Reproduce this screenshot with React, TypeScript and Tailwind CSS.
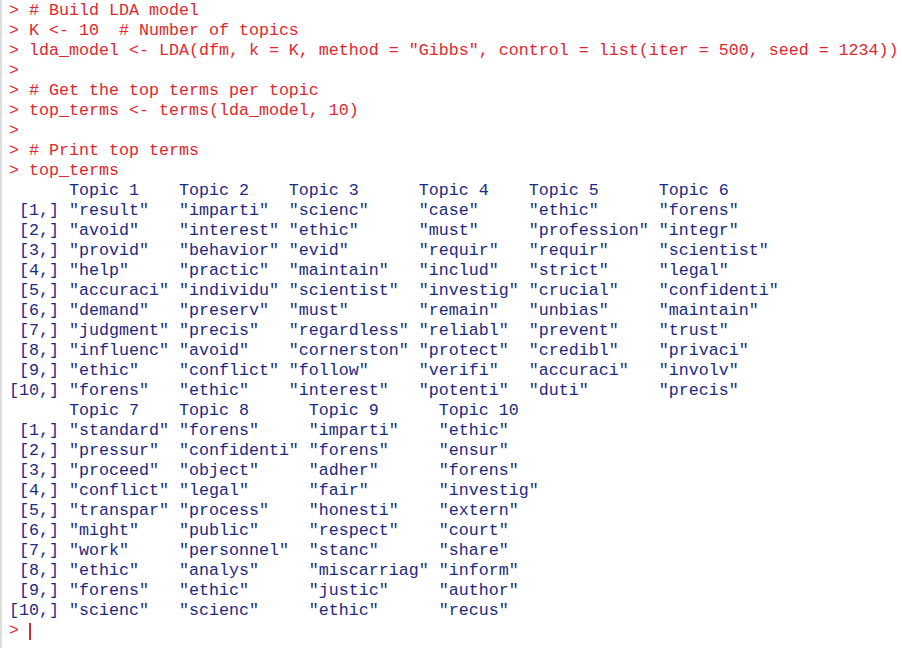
import React from 'react';

type Col = [string, string[]];

const block1: Col[] = [
    ['Topic 1', ['result', 'avoid', 'provid', 'help', 'accuraci', 'demand', 'judgment', 'influenc', 'ethic', 'forens']],
    ['Topic 2', ['imparti', 'interest', 'behavior', 'practic', 'individu', 'preserv', 'precis', 'avoid', 'conflict', 'ethic']],
    ['Topic 3', ['scienc', 'ethic', 'evid', 'maintain', 'scientist', 'must', 'regardless', 'cornerston', 'follow', 'interest']],
    ['Topic 4', ['case', 'must', 'requir', 'includ', 'investig', 'remain', 'reliabl', 'protect', 'verifi', 'potenti']],
    ['Topic 5', ['ethic', 'profession', 'requir', 'strict', 'crucial', 'unbias', 'prevent', 'credibl', 'accuraci', 'duti']],
    ['Topic 6', ['forens', 'integr', 'scientist', 'legal', 'confidenti', 'maintain', 'trust', 'privaci', 'involv', 'precis']],
];

const block2: Col[] = [
    ['Topic 7', ['standard', 'pressur', 'proceed', 'conflict', 'transpar', 'might', 'work', 'ethic', 'forens', 'scienc']],
    ['Topic 8', ['forens', 'confidenti', 'object', 'legal', 'process', 'public', 'personnel', 'analys', 'ethic', 'scienc']],
    ['Topic 9', ['imparti', 'forens', 'adher', 'fair', 'honesti', 'respect', 'stanc', 'miscarriag', 'justic', 'ethic']],
    ['Topic 10', ['ethic', 'ensur', 'forens', 'investig', 'extern', 'court', 'share', 'inform', 'author', 'recus']],
];

// print a character matrix the way R does
const formatBlock = (cols: Col[]) => {
    const widths = cols.map(([h, terms]) => Math.max(h.length, ...terms.map(t => t.length + 2)));
    const lines = ['      ' + cols.map(([h], i) => h.padEnd(widths[i])).join(' ')];
    for (let r = 0; r < 10; r++) {
        const label = `[${r + 1},]`.padStart(5);
        lines.push(label + ' ' + cols.map(([, terms], i) => `"${terms[r]}"`.padEnd(widths[i])).join(' '));
    }
    return lines;
};

const input = (text: string) => ({kind: 'in', text});
const output = (text: string) => ({kind: 'out', text});

const lines = [
    input('> # Build LDA model'),
    input('> K <- 10  # Number of topics'),
    input('> lda_model <- LDA(dfm, k = K, method = "Gibbs", control = list(iter = 500, seed = 1234))'),
    input('> '),
    input('> # Get the top terms per topic'),
    input('> top_terms <- terms(lda_model, 10)'),
    input('> '),
    input('> # Print top terms'),
    input('> top_terms'),
    ...formatBlock(block1).map(output),
    ...formatBlock(block2).map(output),
];

export default function App() {
    return (
        <div className="h-screen w-full overflow-hidden bg-white border-l-2 border-[#dedede]">
            <pre
                className="pl-[7px] pt-[1px] text-[16.667px] leading-[20px] whitespace-pre"
                style={{fontFamily: '"Liberation Mono", "Courier New", monospace'}}
            >
                {lines.map((l, i) => (
                    <div key={i} className={l.kind === 'in' ? 'text-[#e4262e]' : 'text-[#1c2a82]'}>
                        {l.text || ' '}
                    </div>
                ))}
                <div className="text-[#e4262e] flex items-center h-[20px]">
                    <span>{'> '}</span>
                    <span className="inline-block w-[2px] h-[17px] bg-[#e4262e]"/>
                </div>
            </pre>
        </div>
    );
}
